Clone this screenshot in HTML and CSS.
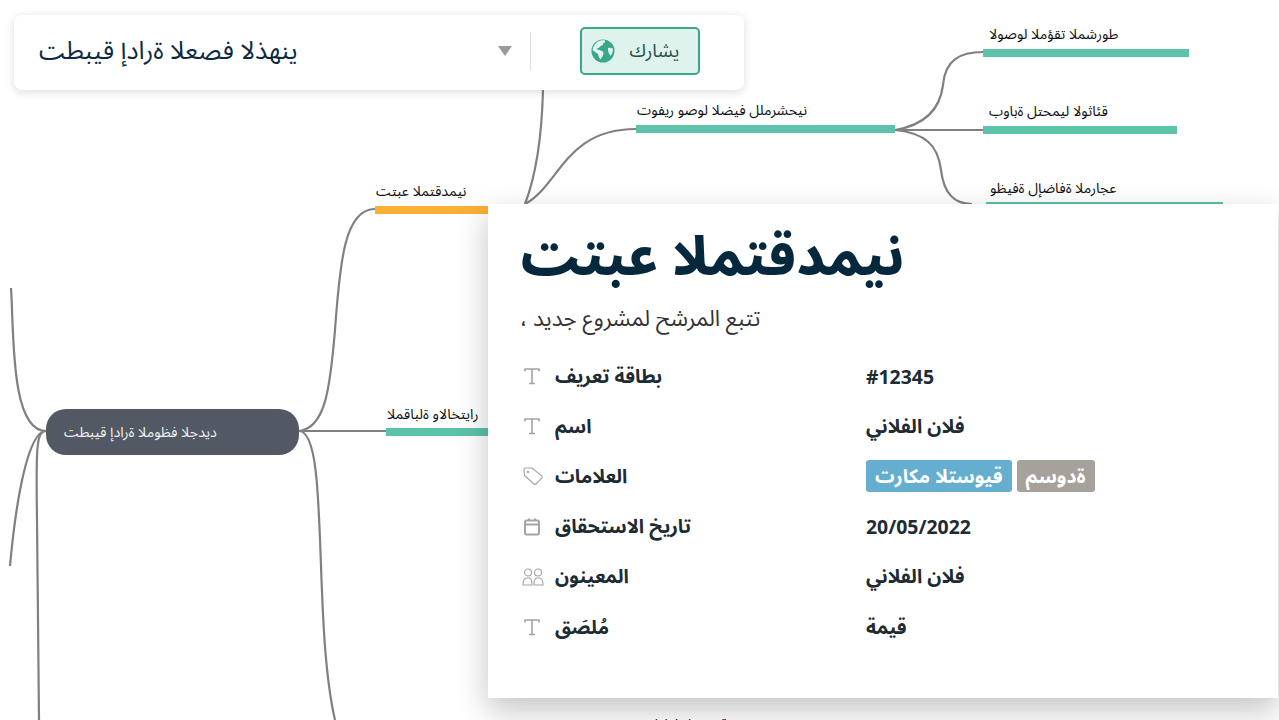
FILE: index.html
```html
<!DOCTYPE html>
<html lang="ar">
<head>
  <meta charset="UTF-8">
  <meta name="viewport" content="width=device-width, initial-scale=1.0">
  <title>ينهذلا فصعلا ةرادإ قيبطت</title>
  <link rel="stylesheet" href="styles.css">
</head>
<body>
  <div class="canvas">
    <svg class="links" width="1279" height="720" viewBox="0 0 1279 720" fill="none">
      <g stroke="#808080" stroke-width="2.2">
        <path d="M299 431 C325 428 330 390 335 330 C340 260 345 209 375 209"/>
        <path d="M299 431 H386"/>
        <path d="M299 431 C330 431 312 620 335 720"/>
        <path d="M46 431 C10 431 14 330 11 288"/>
        <path d="M46 431 C28 431 16 500 10 566"/>
        <path d="M46 431 C36 431 36 450 37 520 C38 600 39 660 39 720"/>
        <path d="M525 204 C560 185 565 129 636 129"/>
        <path d="M525 204 C538 170 542 130 543 90"/>
        <path d="M895 130 C925 125 940 110 943 85 C945 60 960 52 983 52"/>
        <path d="M895 130 H983"/>
        <path d="M895 130 C925 133 938 145 941 170 C944 195 955 204 972 204"/>
      </g>
    </svg>

    <div class="node node-root">ديدجلا فظوملا ةرادإ قيبطت</div>

    <div class="node branch branch-orange n-track"><span class="branch-text">نيمدقتملا عبتت</span></div>
    <div class="node branch n-interview"><span class="branch-text">رايتخالاو ةلباقملا</span></div>
    <div class="node branch n-guest"><span class="branch-text">نيحشرملل فيضلا لوصو ريفوت</span></div>
    <div class="node branch n-temp"><span class="branch-text text-in">طورشملا تقؤملا لوصولا</span></div>
    <div class="node branch n-portal"><span class="branch-text text-in">قئاثولا ليمحتل ةباوب</span></div>
    <div class="node branch n-refs"><span class="branch-text">عجارملا ةفاضإل ةفيظو</span></div>
    <div class="node branch-cut">قيوستلا فئاظو</div>
  </div>

  <header class="topbar">
    <h1 class="app-title">ينهذلا فصعلا ةرادإ قيبطت</h1>
    <span class="caret"></span>
    <span class="divider"></span>
    <div class="share-wrap">
      <button class="share-btn">
        <svg width="24" height="24" viewBox="0 0 24 24">
          <circle cx="12" cy="12" r="11.5" fill="#3aa68c"/>
          <path fill="#e0f3ec" d="M7 2.5 C9 1.5 12 1 14 1.5 C14.5 3 13 4 12 4.5 C12.5 6 11 7 9.5 7 C9 8.5 7 9 5.5 10 C7 11 9.5 11 11 12 C12.5 13 13 14.5 12 16 C11.5 18 10 19 9.5 20.5 C8 19 7.5 17 7 15 C5 14 3 12 1.5 11 C2 7.5 4 4.5 7 2.5 Z"/>
          <path fill="#e0f3ec" d="M17 9 C19 8.5 21 9 22 10 C22 13 21 15 19.5 17 C18 15 16.5 12 17 9 Z"/>
        </svg>
        <span>يشارك</span>
      </button>
    </div>
  </header>

  <section class="card">
    <h2 class="card-title">نيمدقتملا عبتت</h2>
    <p class="card-sub" dir="rtl">تتبع المرشح لمشروع جديد ،</p>

    <div class="field">
      <svg class="ico ico-shift" width="20" height="20" viewBox="0 0 20 20"><path d="M3 5.5 V3 H17 V5.5 M10 3 V17.5 M7 17.5 H13"/></svg>
      <span class="label">بطاقة تعريف</span>
      <span class="value">#12345</span>
    </div>
    <div class="field">
      <svg class="ico ico-shift" width="20" height="20" viewBox="0 0 20 20"><path d="M3 5.5 V3 H17 V5.5 M10 3 V17.5 M7 17.5 H13"/></svg>
      <span class="label">اسم</span>
      <span class="value">فلان الفلاني</span>
    </div>
    <div class="field">
      <svg class="ico ico-thin" width="22" height="20" viewBox="0 0 22 20"><path d="M2 3.5 Q2 2 3.5 2 H10 L20 10 Q20.5 11 20 12 L14 18 Q13 19 12 18 L2.5 9.5 Z"/><circle cx="6" cy="6" r="0.6"/></svg>
      <span class="label">العلامات</span>
      <span class="value tags">
        <span class="tag tag-blue">قيوستلا مكارت</span>
        <span class="tag tag-grey">ةدوسم</span>
      </span>
    </div>
    <div class="field">
      <svg class="ico ico-bold ico-shift" width="20" height="20" viewBox="0 0 20 20"><rect x="3" y="3.5" width="14" height="14" rx="1.5"/><path d="M3 7.5 H17 M7 1.5 V3.5 M13 1.5 V3.5"/></svg>
      <span class="label">تاريخ الاستحقاق</span>
      <span class="value">20/05/2022</span>
    </div>
    <div class="field">
      <svg class="ico ico-thin" width="22" height="20" viewBox="0 0 22 20"><circle cx="6" cy="5.5" r="3.5"/><circle cx="16" cy="5.5" r="3.5"/><path d="M1 18 Q1 11 5 11 H7 Q10 11 10 18 Z M12 18 Q12 11 15 11 H17 Q21 11 21 18 Z"/></svg>
      <span class="label">المعينون</span>
      <span class="value">فلان الفلاني</span>
    </div>
    <div class="field">
      <svg class="ico ico-shift" width="20" height="20" viewBox="0 0 20 20"><path d="M3 5.5 V3 H17 V5.5 M10 3 V17.5 M7 17.5 H13"/></svg>
      <span class="label">مُلصَق</span>
      <span class="value">قيمة</span>
    </div>
  </section>
</body>
</html>
```

FILE: styles.css
```css
/* General */
html, body {
  margin: 0;
  padding: 0;
  height: 100%;
  overflow: hidden;
}

body {
  position: relative;
  width: 1279px;
  height: 720px;
  background-color: #fff;
  color: #1d2b33;
  font-family: "Noto Sans", "Noto Sans Arabic", "Open Sans", sans-serif;
}

/* Mind map */
.canvas {
  position: absolute;
  inset: 0;
}

.links {
  position: absolute;
  left: 0;
  top: 0;
}

.node {
  position: absolute;
}

.node-root {
  left: 46px;
  top: 409px;
  width: 253px;
  height: 46px;
  box-sizing: border-box;
  padding-left: 18px;
  display: flex;
  align-items: center;
  background-color: #525965;
  border-radius: 20px;
  color: #f0f0f0;
  font-size: 14.3px;
}

.branch {
  display: flex;
  flex-direction: column;
  justify-content: flex-end;
  height: 31px;
  border-bottom: 8px solid #5cc2a9;
  box-sizing: border-box;
}

.branch-orange {
  border-bottom-color: #fbb034;
}

.branch-text {
  font-size: 14.3px;
  line-height: 18px;
  color: #111;
  padding: 0 1px 6px 1px;
  white-space: nowrap;
}

.text-in {
  padding-left: 6px;
}

.n-track { left: 375px; top: 183px; width: 113px; }
.n-interview { left: 386px; top: 405px; width: 102px; }
.n-guest { left: 636px; top: 102px; width: 259px; }
.n-temp { left: 983px; top: 26px; width: 206px; }
.n-portal { left: 983px; top: 103px; width: 194px; }
.n-refs { left: 986px; top: 179px; width: 237px; }

.n-refs .branch-text {
  padding: 0 0 5px 4px;
}

.n-interview .branch-text {
  padding-bottom: 5px;
}

.branch-cut {
  left: 648px;
  top: 709px;
  font-size: 14.3px;
  color: #111;
}

/* Top bar */
.topbar {
  position: absolute;
  left: 14px;
  top: 15px;
  width: 730px;
  height: 75px;
  display: flex;
  align-items: center;
  box-sizing: border-box;
  padding-left: 25px;
  background-color: #fff;
  border-radius: 8px;
  box-shadow: 0 2px 10px rgba(0, 0, 0, 0.14);
}

.app-title {
  margin: 0 0 3px;
  flex: 1;
  font-size: 25.3px;
  font-weight: 400;
  color: #0b2a40;
}

.caret {
  width: 0;
  height: 0;
  margin-right: 18px;
  margin-bottom: 3px;
  border-left: 7px solid transparent;
  border-right: 7px solid transparent;
  border-top: 10px solid #9a9a9a;
}

.divider {
  width: 1px;
  height: 38px;
  margin-bottom: 3px;
  background-color: #ddd;
}

.share-wrap {
  width: 213px;
  display: flex;
  justify-content: center;
  padding-bottom: 3px;
}

.share-btn {
  width: 120px;
  height: 48px;
  margin-left: 4px;
  padding: 0 0 0 9px;
  display: flex;
  align-items: center;
  gap: 15px;
  background-color: #dff3ed;
  border: 2px solid #3aa68c;
  border-radius: 5px;
  color: #24524a;
  font-family: inherit;
  font-size: 18.7px;
}

/* Detail card */
.card {
  position: absolute;
  left: 488px;
  top: 204px;
  width: 790px;
  height: 494px;
  box-sizing: border-box;
  padding: 8px 32px 0;
  background-color: #fff;
  box-shadow: 0 12px 30px rgba(0, 0, 0, 0.24);
}

.card-title {
  margin: 0;
  font-size: 54px;
  line-height: 84px;
  font-weight: 800;
  color: #06283d;
}

.card-sub {
  margin: 7px 0 18px;
  font-size: 22.3px;
  line-height: 30px;
  text-align: left;
  color: #333;
}

.field {
  display: grid;
  grid-template-columns: 35px 311px 1fr;
  align-items: center;
  height: 50.2px;
  font-size: 19.4px;
  font-weight: 700;
  color: #1d2b33;
}

.ico {
  fill: none;
  stroke: #a3a3a3;
  stroke-width: 1.6;
}

.ico-shift {
  margin-left: 2px;
}

.ico-thin {
  margin-left: 1.5px;
  stroke-width: 1.1;
}

.ico-bold {
  stroke-width: 2;
}

.tags {
  display: flex;
  gap: 5px;
}

.tag {
  padding: 0 9px;
  height: 32px;
  line-height: 32px;
  border-radius: 3px;
  color: #fff;
}

.tag-blue {
  background-color: #66aecf;
}

.tag-grey {
  background-color: #a6a29b;
}
```
